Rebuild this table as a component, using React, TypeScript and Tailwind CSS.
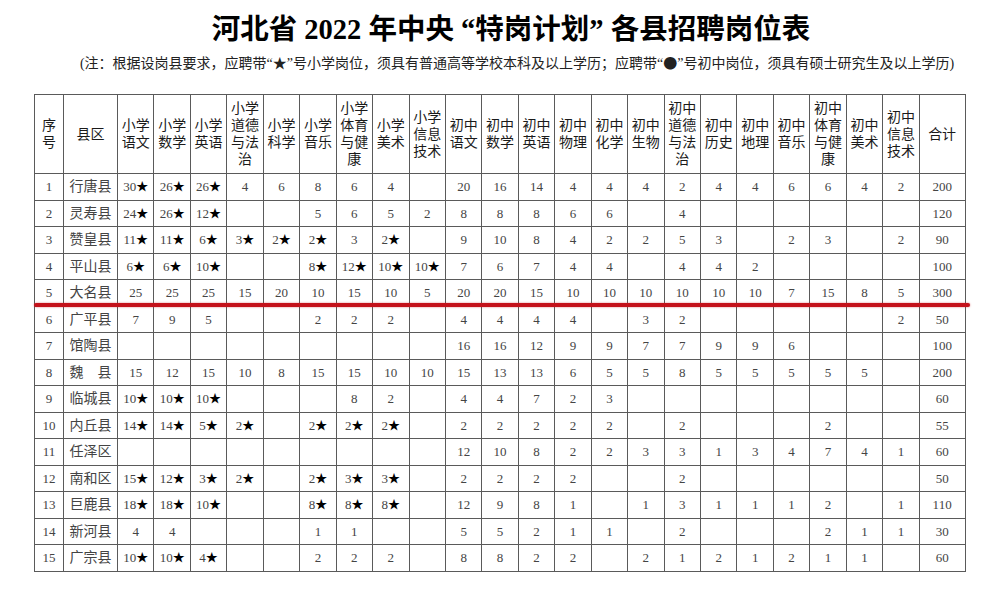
import React from 'react';

const SERIF = "font-['Liberation_Serif','Noto_Sans_CJK_SC',serif]";
const CJK = "font-['Noto_Sans_CJK_SC',sans-serif]";

// 表头：每个元素是一行
const HEADERS: string[][] = [
  ['序', '号'],
  ['县区'],
  ['小学', '语文'],
  ['小学', '数学'],
  ['小学', '英语'],
  ['小学', '道德', '与法', '治'],
  ['小学', '科学'],
  ['小学', '音乐'],
  ['小学', '体育', '与健', '康'],
  ['小学', '美术'],
  ['小学', '信息', '技术'],
  ['初中', '语文'],
  ['初中', '数学'],
  ['初中', '英语'],
  ['初中', '物理'],
  ['初中', '化学'],
  ['初中', '生物'],
  ['初中', '道德', '与法', '治'],
  ['初中', '历史'],
  ['初中', '地理'],
  ['初中', '音乐'],
  ['初中', '体育', '与健', '康'],
  ['初中', '美术'],
  ['初中', '信息', '技术'],
  ['合计'],
];

const ROWS: [string, string[], string[], string][] = [
  ['行唐县', ['30★', '26★', '26★', '4', '6', '8', '6', '4', ''], ['20', '16', '14', '4', '4', '4', '2', '4', '4', '6', '6', '4', '2'], '200'],
  ['灵寿县', ['24★', '26★', '12★', '', '', '5', '6', '5', '2'], ['8', '8', '8', '6', '6', '', '4', '', '', '', '', '', ''], '120'],
  ['赞皇县', ['11★', '11★', '6★', '3★', '2★', '2★', '3', '2★', ''], ['9', '10', '8', '4', '2', '2', '5', '3', '', '2', '3', '', '2'], '90'],
  ['平山县', ['6★', '6★', '10★', '', '', '8★', '12★', '10★', '10★'], ['7', '6', '7', '4', '4', '', '4', '4', '2', '', '', '', ''], '100'],
  ['大名县', ['25', '25', '25', '15', '20', '10', '15', '10', '5'], ['20', '20', '15', '10', '10', '10', '10', '10', '10', '7', '15', '8', '5'], '300'],
  ['广平县', ['7', '9', '5', '', '', '2', '2', '2', ''], ['4', '4', '4', '4', '', '3', '2', '', '', '', '', '', '2'], '50'],
  ['馆陶县', ['', '', '', '', '', '', '', '', ''], ['16', '16', '12', '9', '9', '7', '7', '9', '9', '6', '', '', ''], '100'],
  ['魏\u3000县', ['15', '12', '15', '10', '8', '15', '15', '10', '10'], ['15', '13', '13', '6', '5', '5', '8', '5', '5', '5', '5', '5', ''], '200'],
  ['临城县', ['10★', '10★', '10★', '', '', '', '8', '2', ''], ['4', '4', '7', '2', '3', '', '', '', '', '', '', '', ''], '60'],
  ['内丘县', ['14★', '14★', '5★', '2★', '', '2★', '2★', '2★', ''], ['2', '2', '2', '2', '2', '', '2', '', '', '', '2', '', ''], '55'],
  ['任泽区', ['', '', '', '', '', '', '', '', ''], ['12', '10', '8', '2', '2', '3', '3', '1', '3', '4', '7', '4', '1'], '60'],
  ['南和区', ['15★', '12★', '3★', '2★', '', '2★', '3★', '3★', ''], ['2', '2', '2', '2', '', '', '2', '', '', '', '', '', ''], '50'],
  ['巨鹿县', ['18★', '18★', '10★', '', '', '8★', '8★', '8★', ''], ['12', '9', '8', '1', '', '1', '3', '1', '1', '1', '2', '', '1'], '110'],
  ['新河县', ['4', '4', '', '', '', '1', '1', '', ''], ['5', '5', '2', '1', '1', '', '2', '', '', '', '2', '1', '1'], '30'],
  ['广宗县', ['10★', '10★', '4★', '', '', '2', '2', '2', ''], ['8', '8', '2', '2', '', '2', '1', '2', '1', '2', '1', '1', ''], '60'],
];

function Num({ v }: { v: string }) {
  if (!v.endsWith('★')) return <>{v}</>;
  return (
    <>
      {v.slice(0, -1)}
      <span className="text-black text-[12px]">★</span>
    </>
  );
}

export default function App() {
  return (
    <div className={`relative w-[990px] h-[592px] bg-white overflow-hidden ${SERIF}`}>
      {/* 标题 */}
      <div className="pl-[44px] pt-[12px] text-center">
        <h1 className="h-[36px] pr-[12px] text-[28.5px] leading-[36px] font-bold text-black">
          河北省 2022 年中央 “特岗计划” 各县招聘岗位表
        </h1>
        <p className="mt-[5px] h-[18px] overflow-visible text-[14px] leading-[18px] text-[#222]">
          (注：根据设岗县要求，应聘带“<span className={CJK}>★</span>”号小学岗位，须具有普通高等学校本科及以上学历；应聘带“<span className={CJK}>●</span>”号初中岗位，须具有硕士研究生及以上学历)
        </p>
      </div>

      {/* 表格 */}
      <table className="mt-[23px] ml-[34px] w-[931px] table-fixed border-collapse">
        <colgroup>
          <col className="w-[29px]" />
          <col className="w-[54px]" />
          {Array.from({ length: 22 }).map((_, i) => (
            <col key={i} className="w-[36.45px]" />
          ))}
          <col className="w-[46px]" />
        </colgroup>
        <thead>
          <tr className="h-[79px]">
            {HEADERS.map((lines, i) => (
              <th
                key={i}
                className="border border-[#5a5a5a] p-0 font-normal text-[14px] leading-[17px] text-[#1a1a1a] align-middle"
              >
                {lines.map((l, j) => (
                  <div key={j}>{l}</div>
                ))}
              </th>
            ))}
          </tr>
        </thead>
        <tbody>
          {ROWS.map(([county, primary, middle, total], r) => (
            <tr key={r} className="h-[26.5px]">
              <td className="border border-[#5a5a5a] p-0 text-center text-[13px] text-[#444]">{r + 1}</td>
              <td className="border border-[#5a5a5a] p-0 text-center text-[14px] text-[#444]">{county}</td>
              {[...primary, ...middle].map((v, c) => (
                <td key={c} className="border border-[#5a5a5a] p-0 text-center text-[13px] text-[#444] whitespace-nowrap">
                  <Num v={v} />
                </td>
              ))}
              <td className="border border-[#5a5a5a] p-0 text-center text-[13px] text-[#444]">{total}</td>
            </tr>
          ))}
        </tbody>
      </table>

      {/* 红色标注线 */}
      <div className="absolute left-[34px] top-[303px] w-[936px] h-[4px] rounded-full bg-[#c4121b] shadow-[0_0_2px_rgba(196,18,27,0.6)]" />
    </div>
  );
}
